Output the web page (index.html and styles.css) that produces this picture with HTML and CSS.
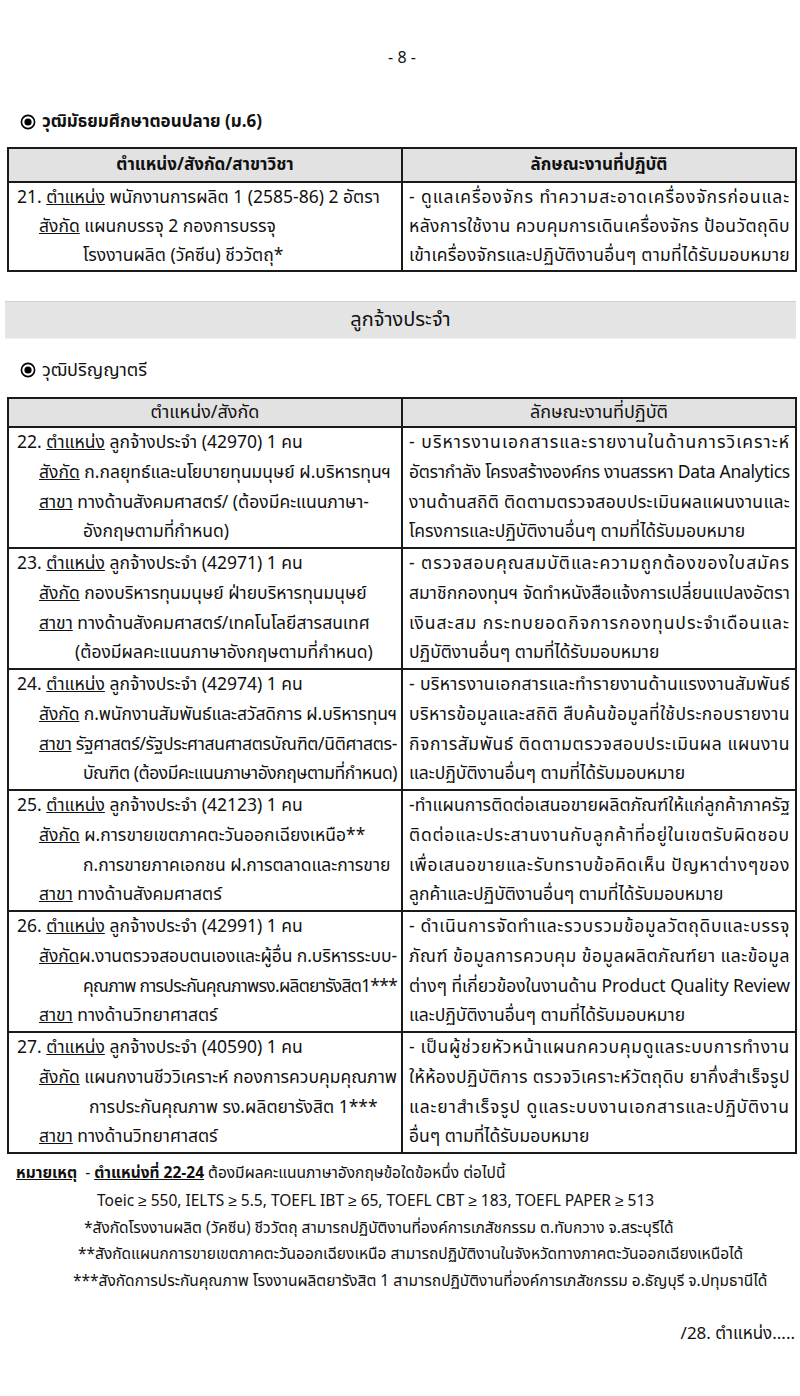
FILE: index.html
```html
<!DOCTYPE html>
<html lang="th">
<head>
<meta charset="utf-8">
<link rel="stylesheet" href="styles.css">
</head>
<body>
<div class="page">
  <div class="pageno">- 8 -</div>

  <div class="sec sec1">
    <svg class="bullet" width="16" height="16" viewBox="0 0 16 16"><circle cx="8" cy="8" r="6.6" fill="none" stroke="#000" stroke-width="1.6"/><circle cx="8" cy="8" r="3.6" fill="#000"/></svg>
    <span>วุฒิมัธยมศึกษาตอนปลาย (ม.6)</span>
  </div>

  <table class="tbl t1">
    <colgroup><col class="cl"><col></colgroup>
    <tr class="head"><th>ตำแหน่ง/สังกัด/สาขาวิชา</th><th>ลักษณะงานที่ปฏิบัติ</th></tr>
    <tr>
      <td class="l">
        <div class="ln">21. <u>ตำแหน่ง</u> พนักงานการผลิต 1 (2585-86) 2 อัตรา</div>
        <div class="ln i1"><u>สังกัด</u> แผนกบรรจุ 2 กองการบรรจุ</div>
        <div class="ln i3">โรงงานผลิต (วัคซีน) ชีววัตถุ*</div>
      </td>
      <td class="r">
        <div class="ln j">- ดูแลเครื่องจักร ทำความสะอาดเครื่องจักรก่อนและ</div>
        <div class="ln j">หลังการใช้งาน ควบคุมการเดินเครื่องจักร ป้อนวัตถุดิบ</div>
        <div class="ln j">เข้าเครื่องจักรและปฏิบัติงานอื่นๆ ตามที่ได้รับมอบหมาย</div>
      </td>
    </tr>
  </table>

  <div class="band">ลูกจ้างประจำ</div>

  <div class="sec sec2">
    <svg class="bullet" width="16" height="16" viewBox="0 0 16 16"><circle cx="8" cy="8" r="6.6" fill="none" stroke="#000" stroke-width="1.6"/><circle cx="8" cy="8" r="3.6" fill="#000"/></svg>
    <span>วุฒิปริญญาตรี</span>
  </div>

  <table class="tbl t2">
    <colgroup><col class="cl"><col></colgroup>
    <tr class="head"><th>ตำแหน่ง/สังกัด</th><th>ลักษณะงานที่ปฏิบัติ</th></tr>
    <tr>
      <td class="l">
        <div class="ln">22. <u>ตำแหน่ง</u> ลูกจ้างประจำ (42970) 1 คน</div>
        <div class="ln i1"><u>สังกัด</u> ก.กลยุทธ์และนโยบายทุนมนุษย์ ฝ.บริหารทุนฯ</div>
        <div class="ln i1"><u>สาขา</u> ทางด้านสังคมศาสตร์/ (ต้องมีคะแนนภาษา-</div>
        <div class="ln i3">อังกฤษตามที่กำหนด)</div>
      </td>
      <td class="r">
        <div class="ln j">- บริหารงานเอกสารและรายงานในด้านการวิเคราะห์</div>
        <div class="ln j">อัตรากำลัง โครงสร้างองค์กร งานสรรหา Data Analytics</div>
        <div class="ln j">งานด้านสถิติ ติดตามตรวจสอบประเมินผลแผนงานและ</div>
        <div class="ln">โครงการและปฏิบัติงานอื่นๆ ตามที่ได้รับมอบหมาย</div>
      </td>
    </tr>
    <tr>
      <td class="l">
        <div class="ln">23. <u>ตำแหน่ง</u> ลูกจ้างประจำ (42971) 1 คน</div>
        <div class="ln i1"><u>สังกัด</u> กองบริหารทุนมนุษย์ ฝ่ายบริหารทุนมนุษย์</div>
        <div class="ln i1"><u>สาขา</u> ทางด้านสังคมศาสตร์/เทคโนโลยีสารสนเทศ</div>
        <div class="ln i2">(ต้องมีผลคะแนนภาษาอังกฤษตามที่กำหนด)</div>
      </td>
      <td class="r">
        <div class="ln j">- ตรวจสอบคุณสมบัติและความถูกต้องของใบสมัคร</div>
        <div class="ln j">สมาชิกกองทุนฯ จัดทำหนังสือแจ้งการเปลี่ยนแปลงอัตรา</div>
        <div class="ln j">เงินสะสม กระทบยอดกิจการกองทุนประจำเดือนและ</div>
        <div class="ln">ปฏิบัติงานอื่นๆ ตามที่ได้รับมอบหมาย</div>
      </td>
    </tr>
    <tr>
      <td class="l">
        <div class="ln">24. <u>ตำแหน่ง</u> ลูกจ้างประจำ (42974) 1 คน</div>
        <div class="ln i1"><u>สังกัด</u> ก.พนักงานสัมพันธ์และสวัสดิการ ฝ.บริหารทุนฯ</div>
        <div class="ln i1"><u>สาขา</u> รัฐศาสตร์/รัฐประศาสนศาสตรบัณฑิต/นิติศาสตร-</div>
        <div class="ln i3">บัณฑิต (ต้องมีคะแนนภาษาอังกฤษตามที่กำหนด)</div>
      </td>
      <td class="r">
        <div class="ln j">- บริหารงานเอกสารและทำรายงานด้านแรงงานสัมพันธ์</div>
        <div class="ln j">บริหารข้อมูลและสถิติ สืบค้นข้อมูลที่ใช้ประกอบรายงาน</div>
        <div class="ln j">กิจการสัมพันธ์ ติดตามตรวจสอบประเมินผล แผนงาน</div>
        <div class="ln">และปฏิบัติงานอื่นๆ ตามที่ได้รับมอบหมาย</div>
      </td>
    </tr>
    <tr>
      <td class="l">
        <div class="ln">25. <u>ตำแหน่ง</u> ลูกจ้างประจำ (42123) 1 คน</div>
        <div class="ln i1"><u>สังกัด</u> ผ.การขายเขตภาคตะวันออกเฉียงเหนือ**</div>
        <div class="ln i3">ก.การขายภาคเอกชน ฝ.การตลาดและการขาย</div>
        <div class="ln i1"><u>สาขา</u> ทางด้านสังคมศาสตร์</div>
      </td>
      <td class="r">
        <div class="ln j">-ทำแผนการติดต่อเสนอขายผลิตภัณฑ์ให้แก่ลูกค้าภาครัฐ</div>
        <div class="ln j">ติดต่อและประสานงานกับลูกค้าที่อยู่ในเขตรับผิดชอบ</div>
        <div class="ln j">เพื่อเสนอขายและรับทราบข้อคิดเห็น ปัญหาต่างๆของ</div>
        <div class="ln">ลูกค้าและปฏิบัติงานอื่นๆ ตามที่ได้รับมอบหมาย</div>
      </td>
    </tr>
    <tr>
      <td class="l">
        <div class="ln">26. <u>ตำแหน่ง</u> ลูกจ้างประจำ (42991) 1 คน</div>
        <div class="ln i1"><u>สังกัด</u>ผ.งานตรวจสอบตนเองและผู้อื่น ก.บริหารระบบ-</div>
        <div class="ln i3">คุณภาพ การประกันคุณภาพรง.ผลิตยารังสิต1***</div>
        <div class="ln i1"><u>สาขา</u> ทางด้านวิทยาศาสตร์</div>
      </td>
      <td class="r">
        <div class="ln j">- ดำเนินการจัดทำและรวบรวมข้อมูลวัตถุดิบและบรรจุ</div>
        <div class="ln j">ภัณฑ์ ข้อมูลการควบคุม ข้อมูลผลิตภัณฑ์ยา และข้อมูล</div>
        <div class="ln j">ต่างๆ ที่เกี่ยวข้องในงานด้าน Product Quality Review</div>
        <div class="ln">และปฏิบัติงานอื่นๆ ตามที่ได้รับมอบหมาย</div>
      </td>
    </tr>
    <tr>
      <td class="l">
        <div class="ln">27. <u>ตำแหน่ง</u> ลูกจ้างประจำ (40590) 1 คน</div>
        <div class="ln i1"><u>สังกัด</u> แผนกงานชีววิเคราะห์ กองการควบคุมคุณภาพ</div>
        <div class="ln i4">การประกันคุณภาพ รง.ผลิตยารังสิต 1***</div>
        <div class="ln i1"><u>สาขา</u> ทางด้านวิทยาศาสตร์</div>
      </td>
      <td class="r">
        <div class="ln j">- เป็นผู้ช่วยหัวหน้าแผนกควบคุมดูแลระบบการทำงาน</div>
        <div class="ln j">ให้ห้องปฏิบัติการ ตรวจวิเคราะห์วัตถุดิบ ยากึ่งสำเร็จรูป</div>
        <div class="ln j">และยาสำเร็จรูป ดูแลระบบงานเอกสารและปฏิบัติงาน</div>
        <div class="ln">อื่นๆ ตามที่ได้รับมอบหมาย</div>
      </td>
    </tr>
  </table>

  <div class="notes">
    <div class="n0"><b><u>หมายเหตุ</u></b>&nbsp; - <b><u>ตำแหน่งที่ 22-24</u></b> ต้องมีผลคะแนนภาษาอังกฤษข้อใดข้อหนึ่ง ต่อไปนี้</div>
    <div class="n1">Toeic ≥ 550, IELTS ≥ 5.5, TOEFL IBT ≥ 65, TOEFL CBT ≥ 183, TOEFL PAPER ≥ 513</div>
    <div class="n2">*สังกัดโรงงานผลิต (วัคซีน) ชีววัตถุ สามารถปฏิบัติงานที่องค์การเภสัชกรรม ต.ทับกวาง จ.สระบุรีได้</div>
    <div class="n3">**สังกัดแผนกการขายเขตภาคตะวันออกเฉียงเหนือ สามารถปฏิบัติงานในจังหวัดทางภาคตะวันออกเฉียงเหนือได้</div>
    <div class="n4">***สังกัดการประกันคุณภาพ โรงงานผลิตยารังสิต 1 สามารถปฏิบัติงานที่องค์การเภสัชกรรม อ.ธัญบุรี จ.ปทุมธานีได้</div>
  </div>

  <div class="next">/28. ตำแหน่ง.....</div>
</div>
<script src="fit.js"></script>
</body>
</html>
```

FILE: styles.css
```css
html, body {
  margin: 0;
  padding: 0;
  background: #fff;
}
body {
  font-family: "Tahoma", "Noto Sans Thai", "Noto Sans Thai Looped", "Loma", "Garuda", "Noto Sans", sans-serif;
  color: #111;
  font-size: 17.5px;
}
.page {
  width: 800px;
  height: 1396px;
  overflow: hidden;
  padding-top: 44px;
  box-sizing: border-box;
}
.pageno {
  text-align: center;
  font-size: 16px;
  line-height: 28px;
  padding-left: 4px;
}
.sec {
  display: flex;
  align-items: center;
  gap: 6px;
  padding-left: 20px;
  font-size: 17px;
  font-weight: bold;
}
.sec1 { margin-top: 36px; height: 28px; }
.sec2 { margin-top: 17px; height: 28px; font-weight: normal; font-size: 18px; }
.bullet { flex: none; }
.tbl {
  border-collapse: collapse;
  margin-left: 7px;
  width: 790px;
  table-layout: fixed;
}
.tbl col.cl { width: 394px; }
.t1 { margin-top: 11px; }
.t2 { margin-top: 13px; }
.tbl th, .tbl td {
  border: 2px solid #1a1a1a;
  vertical-align: top;
  padding: 0;
}
.tbl th {
  background: #e2e2e2;
  font-weight: bold;
  font-size: 17px;
  height: 32px;
  text-align: center;
  vertical-align: middle;
}
.t2 th { height: 27px; font-weight: normal; font-size: 18px; }
.tbl td.l { padding: 0 4px 0 8px; }
.tbl td.r { padding: 0 5px 0 6px; }
.ln {
  line-height: 29.75px;
  white-space: nowrap;
}
.t1 .ln { line-height: 29px; }
.tx { display: inline-block; }
.i1 { padding-left: 22px; }
.i2 { padding-left: 58px; }
.i3 { padding-left: 66px; }
.i4 { padding-left: 72px; }
.band {
  margin: 29px 0 0 5px;
  width: 791px;
  height: 36px;
  background: #e4e4e4;
  border-top: 1px solid #d0d0d0;
  border-bottom: 1px solid #f0f0f0;
  text-align: center;
  line-height: 36px;
  font-size: 20px;
}
.notes {
  margin-top: 4px;
  font-size: 15.5px;
  line-height: 26.5px;
}
.n0 { padding-left: 16px; line-height: 31px; }
.n1 { padding-left: 97px; }
.n2 { padding-left: 84px; }
.n3 { padding-left: 78px; }
.n4 { padding-left: 73px; }
.next {
  text-align: right;
  padding-right: 5px;
  margin-top: 26px;
  font-size: 17px;
}
```

FILE: fit.js
```js
(function () {
  var seg = (typeof Intl !== 'undefined' && Intl.Segmenter) ? new Intl.Segmenter('th', { granularity: 'grapheme' }) : null;
  function count(s) {
    if (seg) { var n = 0; for (var x of seg.segment(s)) n++; return n; }
    return s.length;
  }
  var lines = document.querySelectorAll('.tbl .ln');
  lines.forEach(function (el) {
    var span = document.createElement('span');
    span.className = 'tx';
    while (el.firstChild) span.appendChild(el.firstChild);
    el.appendChild(span);
  });
  lines.forEach(function (el) {
    var span = el.firstChild;
    var cs = getComputedStyle(el);
    var avail = el.clientWidth - parseFloat(cs.paddingLeft) - parseFloat(cs.paddingRight);
    var n = Math.max(1, count(span.textContent) - 1);
    var w = span.getBoundingClientRect().width;
    if (el.classList.contains('j') || w > avail) {
      var ls = (avail - w) / n;
      for (var k = 0; k < 3; k++) {
        span.style.letterSpacing = ls.toFixed(3) + 'px';
        var w2 = span.getBoundingClientRect().width;
        ls += (avail - w2) / n;
      }
      span.style.letterSpacing = ls.toFixed(3) + 'px';
    }
  });
})();
```
